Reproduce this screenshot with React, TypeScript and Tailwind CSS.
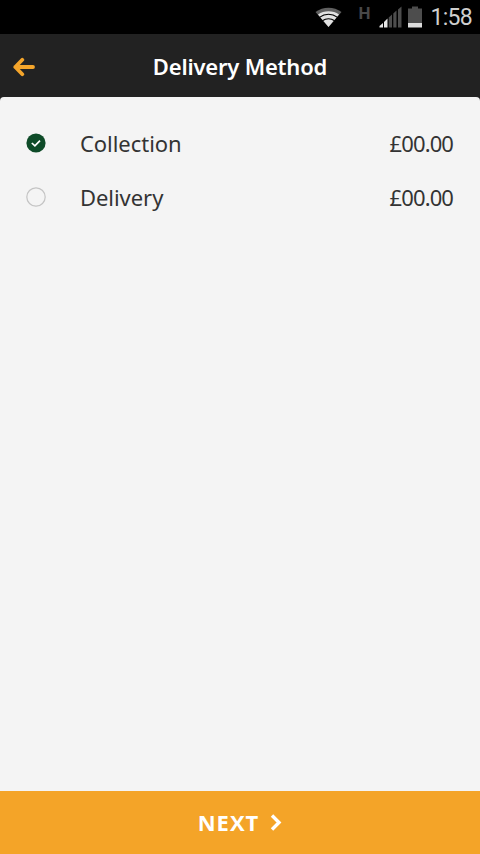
import React, { useState } from "react";

const methods = [
  { name: "Collection", price: "£00.00" },
  { name: "Delivery", price: "£00.00" },
];

function StatusBar() {
  return (
    <div className="flex h-[34px] shrink-0 items-center justify-end bg-black pr-2">
      <svg width="27" height="20" viewBox="0 0 27 20" fill="none">
        <path d="M0.5 5C8 -0.8 19 -0.8 26.5 5L13.5 20Z" fill="#606060" />
        <path d="M3 7.6C9 3.2 18 3.2 24 7.6L13.5 20Z" fill="#e2e2e2" />
        <path
          d="M4.4 10.4C10 6.4 17 6.4 22.6 10.4M7.4 13.8C11 11.2 16 11.2 19.6 13.8"
          stroke="#000000"
          strokeWidth="1.1"
        />
      </svg>
      <span className="ml-4 mb-[9px] w-3 font-['Roboto'] text-[17px] leading-4 font-bold text-[#484848]">
        H
      </span>
      <svg className="ml-[9px]" width="24" height="22" viewBox="0 0 24 22">
        <path d="M0.5 21.5V20L4 17V21.5Z" fill="#e8e8e8" />
        <path d="M5 21.5V16L8.5 12.5V21.5Z" fill="#e8e8e8" />
        <path d="M9.7 21.5V11.5L13 8.5V21.5Z" fill="#4d4d4d" />
        <path d="M14.3 21.5V7.5L17.5 4.5V21.5Z" fill="#4d4d4d" />
        <path d="M19 21.5V3.5L22.5 0.5V21.5Z" fill="#4d4d4d" />
      </svg>
      <svg className="ml-[5px]" width="14" height="22" viewBox="0 0 14 22">
        <path d="M4 0.5H10V2.5H14V17H0V2.5H4Z" fill="#4d4d4d" />
        <path d="M0 17H14V21.5H0Z" fill="#dcdcdc" />
      </svg>
      <span className="ml-2 pt-px font-['Roboto'] text-[23px] leading-[33px] tracking-[-0.7px] text-[#cfcfcf]">
        1:58
      </span>
    </div>
  );
}

export default function App() {
  const [selected, setSelected] = useState(0);

  return (
    <main className="flex h-[854px] w-[480px] flex-col overflow-hidden bg-[#222222] font-['Noto_Sans',sans-serif]">
      <StatusBar />
      <header className="grid h-[63px] shrink-0 grid-cols-[48px_1fr_48px] items-center">
        <button className="pt-[2px] pl-[13px]" aria-label="Back">
          <svg width="23" height="20" viewBox="0 0 23 20" fill="none">
            <path
              d="M20 10H2.3M9.3 2.8L2.3 10L9.3 17.2"
              stroke="#f4a52b"
              strokeWidth="3.8"
              strokeLinecap="round"
              strokeLinejoin="round"
            />
          </svg>
        </button>
        <h1 className="pt-px text-center text-[22px] leading-8 font-semibold tracking-[-0.2px] text-white">
          Delivery Method
        </h1>
      </header>
      <section className="flex-1 rounded-t-[4px] bg-[#f4f4f4] pt-5">
        {methods.map((method, i) => (
          <button
            key={method.name}
            onClick={() => setSelected(i)}
            className="flex h-[53.5px] w-full items-center pr-[27px] pl-[26px] text-[22px] text-[#333333]"
          >
            <svg className="mb-px" width="20" height="20" viewBox="0 0 20 20" fill="none">
              {selected === i ? (
                <>
                  <circle cx="10" cy="10" r="9.6" fill="#0e4b28" />
                  <path
                    d="M5.8 10L8.9 12.9L14 7.6"
                    stroke="#ffffff"
                    strokeWidth="1.7"
                  />
                </>
              ) : (
                <circle cx="10" cy="10" r="9.2" stroke="#c4c4c4" strokeWidth="1.2" />
              )}
            </svg>
            <span className="ml-[34px] tracking-[-0.05px]">{method.name}</span>
            <span className="ml-auto tracking-[-0.9px]">{method.price}</span>
          </button>
        ))}
      </section>
      <button className="flex h-[63px] shrink-0 items-center justify-center bg-[#f4a428] text-white">
        <span className="font-['Open_Sans'] text-[22px] font-bold tracking-[1px]">NEXT</span>
        <svg className="ml-[11px]" width="12" height="17" viewBox="0 0 12 17" fill="none">
          <path d="M2 1.5L9 8.5L2 15.5" stroke="#ffffff" strokeWidth="3.4" />
        </svg>
      </button>
    </main>
  );
}
